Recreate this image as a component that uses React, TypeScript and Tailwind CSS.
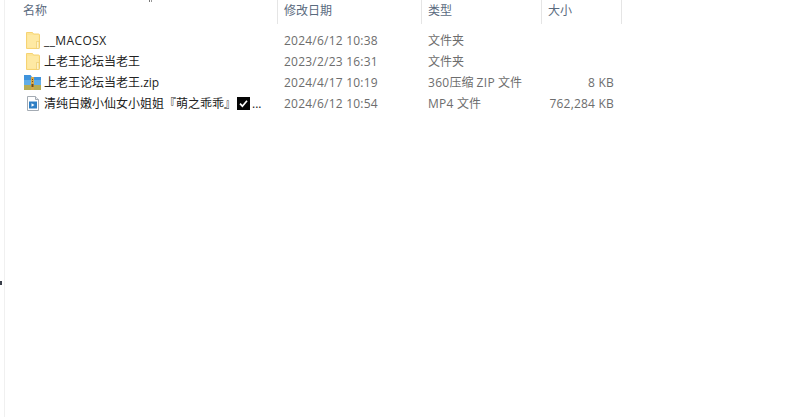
const FONT = "font-['Open_Sans','Noto_Sans_CJK_SC',sans-serif]";

const Folder = () => (
  <svg width="14" height="17" viewBox="0 0 14 17" className="shrink-0">
    <path d="M.5.5h6l1 1.5h5a1 1 0 0 1 1 1v12.5a1 1 0 0 1-1 1H.5z" fill="#fde596" stroke="#f6d373" strokeWidth="1" />
    <path d="M1.5 3h11v12.5h-11z" fill="#fee9a4" />
    <path d="M10.5 9.5h2.5v7h-2.5z" fill="#fff3c9" stroke="#eccb6e" strokeWidth="0.7" />
  </svg>
);

const Zip = () => (
  <svg width="17" height="15" viewBox="0 0 17 15" className="shrink-0 -ml-[2px]">
    <path d="M0 0h6.5l1.5 2H17v8H0z" fill="#3f93dc" />
    <path d="M0 5h17v5H0z" fill="#62aee8" />
    <path d="M0 10h17v5H0z" fill="#b7ad55" />
    <path d="M7 2h3v13H7z" fill="#d6a94a" />
    <path d="M8 4h1v1H8zm0 2h1v1H8zm-.5 3h2v3h-2z" fill="#6d4c1e" />
  </svg>
);

const Video = () => (
  <svg width="12" height="15" viewBox="0 0 12 15" className="shrink-0">
    <path d="M.5.5h8l3 3v11H.5z" fill="#fff" stroke="#a4abb3" />
    <path d="M8.5.5v3h3" fill="#e8ecf0" stroke="#a4abb3" />
    <path d="M2 5.5h8v7H2z" fill="#2f7fc4" />
    <path d="M4.5 7.2l3 1.8-3 1.8z" fill="#fff" />
  </svg>
);

const Check = () => (
  <svg width="13" height="13" viewBox="0 0 13 13" className="inline-block shrink-0 ml-[1px] mr-[2px]">
    <rect width="13" height="13" fill="#050505" />
    <path d="M3 6.6l2.4 2.6L10 3.8" fill="none" stroke="#fff" strokeWidth="1.7" />
  </svg>
);

const columns = [
  { label: "名称", className: "w-[273px] pl-[18px]" },
  { label: "修改日期", className: "w-[144px] pl-[6px]" },
  { label: "类型", className: "w-[120px] pl-[6px]" },
  { label: "大小", className: "w-[80px] pl-[6px]" },
];

const rows = [
  { icon: <Folder />, name: <span className="tracking-[0.4px]">__MACOSX</span>, key: "macosx", date: "2024/6/12 10:38", type: "文件夹", size: "" },
  { icon: <Folder />, name: "上老王论坛当老王", key: "folder", date: "2023/2/23 16:31", type: "文件夹", size: "" },
  { icon: <Zip />, name: "上老王论坛当老王.zip", key: "zip", date: "2024/4/17 10:19", type: <><span className="tracking-[0.3px]">360</span>压缩 <span className="tracking-[0.3px]">ZIP</span> 文件</>, size: "8 KB" },
  { icon: <Video />, name: "清纯白嫩小仙女小姐姐『萌之乖乖』", key: "video", date: "2024/6/12 10:54", type: <><span className="tracking-[0.3px]">MP4</span> 文件</>, size: "762,284 KB", check: true },
];

export default function App() {
  return (
    <div className={`w-[787px] h-[417px] bg-white overflow-hidden relative text-[12px] ${FONT}`}>
      {/* stray bits of the cropped window */}
      <div className="absolute left-[149px] top-0 w-[1px] h-[2px] bg-[#777]" />
      <div className="absolute left-[151px] top-0 w-[1px] h-[2px] bg-[#999]" />
      <div className="absolute left-0 top-[281px] w-[2px] h-[4px] bg-[#3a3f4a]" />
      <div className="ml-[4px] h-full border-l border-[#f0f0f0]">
        <div className="flex h-[24px] text-[#5a6a7e]">
          {columns.map((c) => (
            <div key={c.label} className={`${c.className} flex items-center border-r border-[#e5e5e5] h-[24px] pb-[3px]`}>
              {c.label}
            </div>
          ))}
        </div>
        <div className="pt-[6px] text-[#6d6d6d]">
          {rows.map((r) => (
            <div key={r.key} className="flex h-[21px] items-center">
              <div className="w-[273px] flex items-center pl-[18px]">
                <div className="w-[21px] flex justify-center pr-[1px]">{r.icon}</div>
                <span className="text-[#222] whitespace-nowrap">{r.name}</span>
                {r.check && <Check />}
                {r.check && <span className="text-[#222]">...</span>}
              </div>
              <div className="w-[144px] pl-[6px] whitespace-nowrap tracking-[0.22px]">{r.date}</div>
              <div className="w-[120px] pl-[6px] whitespace-nowrap">{r.type}</div>
              <div className="w-[80px] pr-[8px] text-right whitespace-nowrap tracking-[0.2px]">{r.size}</div>
            </div>
          ))}
        </div>
      </div>
    </div>
  );
}
